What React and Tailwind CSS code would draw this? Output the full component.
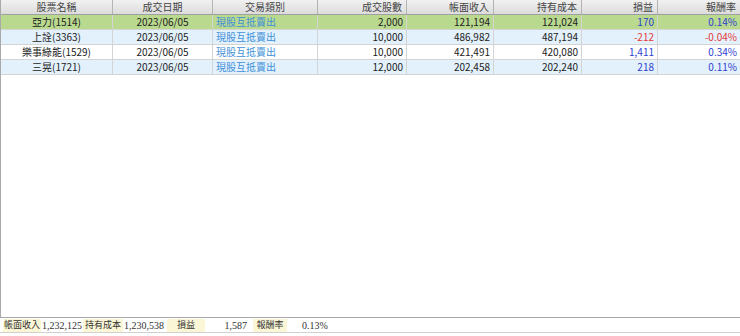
const columns = [
  { name: "股票名稱", w: "w-[112px]" },
  { name: "成交日期", w: "w-[100px]" },
  { name: "交易類別", w: "w-[105px]" },
  { name: "成交股數", w: "w-[89px]" },
  { name: "帳面收入", w: "w-[87px]" },
  { name: "持有成本", w: "w-[88px]" },
  { name: "損益", w: "w-[76px]" },
  { name: "報酬率", w: "w-[83px]" },
];

const rows = [
  { name: "亞力(1514)", date: "2023/06/05", type: "現股互抵賣出", qty: "2,000", income: "121,194", cost: "121,024", pl: "170", rate: "0.14%", bg: "bg-[#b9d98f]" },
  { name: "上詮(3363)", date: "2023/06/05", type: "現股互抵賣出", qty: "10,000", income: "486,982", cost: "487,194", pl: "-212", rate: "-0.04%", bg: "bg-[#e3f1fc]" },
  { name: "樂事綠能(1529)", date: "2023/06/05", type: "現股互抵賣出", qty: "10,000", income: "421,491", cost: "420,080", pl: "1,411", rate: "0.34%", bg: "bg-white" },
  { name: "三晃(1721)", date: "2023/06/05", type: "現股互抵賣出", qty: "12,000", income: "202,458", cost: "202,240", pl: "218", rate: "0.11%", bg: "bg-[#e3f1fc]" },
];

function Cell({ w, align = "text-right", className = "", children }) {
  return (
    <div className={`${w} ${align} shrink-0 h-full border-r border-[#d4d4d4] px-[3px] leading-[14px] whitespace-nowrap overflow-hidden ${className}`}>
      {children}
    </div>
  );
}

export default function App() {
  const font = { fontFamily: '"Noto Sans CJK TC", "Noto Sans", sans-serif' };
  return (
    <div className="w-[740px] h-[336px] bg-white flex flex-col overflow-hidden text-[10px] text-[#222]" style={font}>
      {/* table */}
      <div className="h-[318px] shrink-0 border-l border-b border-[#a9a9a9] flex flex-col">
        <div className="flex h-[15px] border-b border-[#a0a0a0] bg-gradient-to-b from-[#f1f1f1] to-[#dcdcdc] text-[#444]">
          {columns.map((c, i) => (
            <div key={c.name} className={`${c.w} shrink-0 h-full border-r border-[#b4b4b4] leading-[14px] ${i < 3 ? "text-center" : "text-right pr-[4px]"}`}>
              {c.name}
            </div>
          ))}
        </div>
        {rows.map((r) => {
          const neg = r.pl.startsWith("-");
          const tone = neg ? "text-[#e53935]" : "text-[#2f3fd0]";
          return (
            <div key={r.name} className={`flex h-[15px] border-b border-[#d4d4d4] ${r.bg}`}>
              <Cell w={columns[0].w} align="text-center">{r.name}</Cell>
              <Cell w={columns[1].w} align="text-center">{r.date}</Cell>
              <Cell w={columns[2].w} align="text-left" className="text-[#3f8fd8]">{r.type}</Cell>
              <Cell w={columns[3].w}>{r.qty}</Cell>
              <Cell w={columns[4].w}>{r.income}</Cell>
              <Cell w={columns[5].w}>{r.cost}</Cell>
              <Cell w={columns[6].w} className={tone}>{r.pl}</Cell>
              <Cell w={columns[7].w} className={tone}>{r.rate}</Cell>
            </div>
          );
        })}
      </div>

      {/* summary */}
      <div className="h-[15px] shrink-0 flex items-center pl-[3px] text-[9px] text-[#333] border-b border-[#d0d0d0] whitespace-nowrap" style={{ fontFamily: '"Liberation Serif", "Noto Sans CJK TC", serif' }}>
        <div className="w-[38px] h-[13px] leading-[13px] bg-[#fbf7d6] text-center">帳面收入</div>
        <div className="w-[42px] text-center text-[10px]">1,232,125</div>
        <div className="w-[40px] h-[13px] leading-[13px] bg-[#fbf7d6] text-center">持有成本</div>
        <div className="w-[42px] text-center text-[10px]">1,230,538</div>
        <div className="w-[38px] ml-[2px] h-[13px] leading-[13px] bg-[#fbf7d6] text-center">損益</div>
        <div className="w-[45px] text-right pr-[3px] text-[10px]">1,587</div>
        <div className="w-[34px] ml-[3px] h-[13px] leading-[13px] bg-[#fbf7d6] text-center">報酬率</div>
        <div className="w-[56px] text-center text-[10px]">0.13%</div>
      </div>
      <div className="flex-1" />
    </div>
  );
}
